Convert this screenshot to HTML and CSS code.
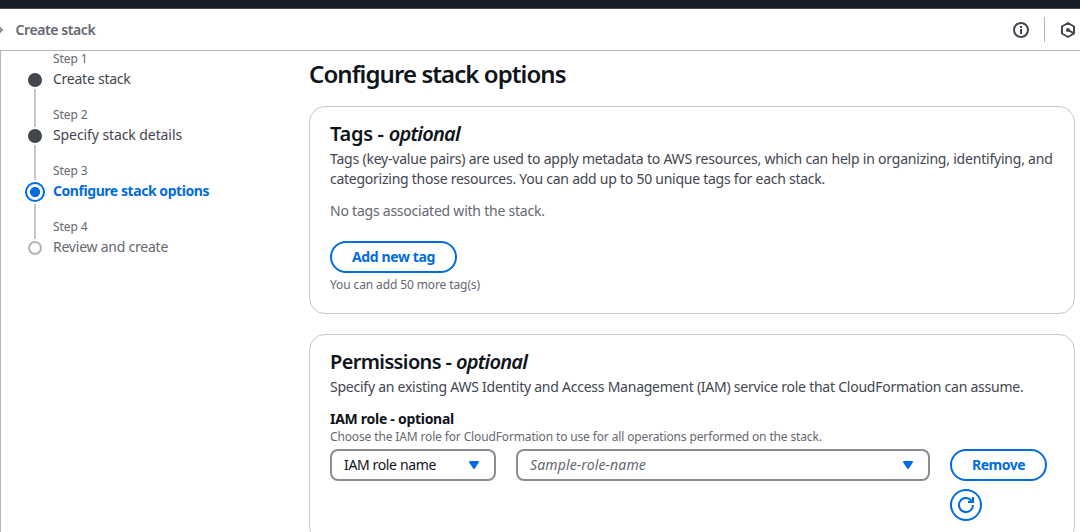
FILE: index.html
```
<!DOCTYPE html>
<html lang="en">
<head>
<meta charset="utf-8">
<title>Configure stack options</title>
<link rel="stylesheet" href="styles.css">
</head>
<body>
<div class="topbar"></div>
<header class="crumbs">
  <svg class="chevron" width="4" height="10" viewBox="0 0 4 10" fill="none" stroke="#8c8c94" stroke-width="2"><path d="M-2 1l4 4-4 4"/></svg>
  <span class="crumb">Create stack</span>
  <div class="tools">
    <svg width="16" height="16" viewBox="0 0 16 16" fill="none" stroke="#424650" stroke-width="2"><circle cx="8" cy="8" r="7"/><path d="M8 4v2M8 7v5"/></svg>
    <span class="divider"></span>
    <svg width="16" height="16" viewBox="0 0 16 16" fill="none" stroke="#424650" stroke-width="2" stroke-linejoin="round"><path d="M8 1l6 3.500v7L8 15l-6-3.500v-7z"/><path d="M8 8l5.500 3.200"/><circle cx="8" cy="8" r="1" fill="#424650"/></svg>
  </div>
</header>
<div class="page">
  <nav>
    <ol class="steps">
      <li class="step done"><div class="rail"><i class="dot"></i><i class="line"></i></div><div class="label"><small>Step 1</small><span class="s1">Create stack</span></div></li>
      <li class="step done"><div class="rail"><i class="dot"></i><i class="line"></i></div><div class="label"><small>Step 2</small><span class="s2">Specify stack details</span></div></li>
      <li class="step active"><div class="rail"><i class="dot"></i><i class="line"></i></div><div class="label"><small>Step 3</small><span class="s3">Configure stack options</span></div></li>
      <li class="step todo"><div class="rail"><i class="dot"></i></div><div class="label"><small>Step 4</small><span class="s4">Review and create</span></div></li>
    </ol>
  </nav>
  <main>
    <h1>Configure stack options</h1>
    <section class="card tags">
      <h2>Tags - <em>optional</em></h2>
      <p class="desc"><span class="d1">Tags (key-value pairs) are used to apply metadata to AWS resources, which can help in organizing, identifying, and</span><br><span class="d2">categorizing those resources. You can add up to 50 unique tags for each stack.</span></p>
      <p class="empty">No tags associated with the stack.</p>
      <button class="btn add">Add new tag</button>
      <p class="hint">You can add 50 more tag(s)</p>
    </section>
    <section class="card perms">
      <h2>Permissions - <em>optional</em></h2>
      <p class="desc">Specify an existing AWS Identity and Access Management (IAM) service role that CloudFormation can assume.</p>
      <p class="field">IAM role - optional</p>
      <p class="hint help">Choose the IAM role for CloudFormation to use for all operations performed on the stack.</p>
      <div class="row">
        <div class="select kind"><span>IAM role name</span><svg width="12" height="9" viewBox="0 0 12 9"><path d="M2 1h8L6 7z" fill="#006ce0" stroke="#006ce0" stroke-width="2" stroke-linejoin="round"/></svg></div>
        <div class="select role"><span>Sample-role-name</span><svg width="12" height="9" viewBox="0 0 12 9"><path d="M2 1h8L6 7z" fill="#006ce0" stroke="#006ce0" stroke-width="2" stroke-linejoin="round"/></svg></div>
        <div class="actions">
          <button class="btn remove">Remove</button>
          <button class="btn refresh" aria-label="Refresh"><svg width="16" height="16" viewBox="0 0 16 16" fill="none" stroke="#006ce0" stroke-width="2"><path d="M15 8a7 7 0 1 1-2.200-5.100L15 5"/><path d="M15 0v5h-5"/></svg></button>
        </div>
      </div>
    </section>
  </main>
</div>
</body>
</html>
```
FILE: styles.css
```
* { box-sizing: border-box; margin: 0; padding: 0; }
body {
  height: 532px;
  overflow: hidden;
  display: flex;
  flex-direction: column;
  background: #fff;
  color: #424650;
  font: 14px/20px "Noto Sans", "Open Sans", sans-serif;
  white-space: nowrap;
}
svg { display: block; flex: none; overflow: hidden; }
.topbar { height: 9px; flex: none; background: #161d26; border-bottom: 1px solid #424650; }
.crumbs {
  height: 42px;
  flex: none;
  display: flex;
  align-items: center;
  border-bottom: 1px solid #b4b4bb;
}
.chevron { margin-right: 11.5px; }
.crumb { color: #656871; font-weight: 650; letter-spacing: -0.41px; }
.tools { margin-left: auto; display: flex; align-items: center; margin-right: 4px; }
.divider { width: 1px; height: 25px; background: #b4b4bb; margin: 0 15px; }
.page { flex: 1; min-height: 0; display: flex; border-left: 1px solid #b4b4bb; }
nav { width: 308px; flex: none; padding-left: 24px; }
.steps { list-style: none; }
.step { display: flex; height: 56px; }
.rail { width: 20px; display: flex; flex-direction: column; align-items: center; padding-top: 22px; }
.dot { width: 14px; height: 14px; flex: none; border-radius: 50%; background: #424650; }
.line { width: 2px; height: 38px; flex: none; background: #c6c6cd; margin-top: 2px; }
.active .dot {
  width: 20px;
  height: 20px;
  margin-top: -3px;
  border: 2px solid #006ce0;
  background: radial-gradient(circle, #006ce0 0 4.7px, #fff 5.300px);
}
.done:nth-child(2) .line { height: 35px; }
.active .line { height: 35px; }
.todo .dot { border: 2px solid #b4b4bb; background: #fff; }
.label { padding-left: 8px; display: flex; flex-direction: column; }
.label small { font-size: 12px; line-height: 16px; color: #656871; padding-bottom: 2px; letter-spacing: -0.09px; }
.s1 { letter-spacing: -0.25px; }
.s2 { letter-spacing: -0.09px; }
.s3 { letter-spacing: -0.44px; color: #006ce0; font-weight: 700; }
.s4 { letter-spacing: -0.23px; color: #656871; }
main { width: 766px; flex: none; padding-top: 8px; color: #424650; }
h1 { font-size: 24px; line-height: 30px; font-weight: 650; letter-spacing: -0.93px; color: #0f141a; }
.card { border: 1px solid #c6c6cd; border-radius: 16px; padding: 15px 20px 0; }
.tags { height: 208px; margin-top: 17px; }
.perms { height: 208px; margin-top: 20px; }
h2 { font-size: 20px; line-height: 24px; font-weight: 650; letter-spacing: -0.63px; color: #0f141a; }
.tags h2 { letter-spacing: -0.29px; }
.tags h2 em, h2 em { letter-spacing: -0.76px; }
.desc { padding-top: 3px; letter-spacing: -0.244px; }
.d1 { letter-spacing: -0.212px; }
.d2 { letter-spacing: -0.254px; }
.empty { margin-top: 12px; color: #656871; letter-spacing: -0.23px; }
.btn {
  height: 32px;
  display: flex;
  align-items: center;
  justify-content: center;
  border: 2px solid #006ce0;
  border-radius: 20px;
  background: #fff;
  color: #006ce0;
  font: 700 14px/20px "Noto Sans", "Open Sans", sans-serif;
}
.add { width: 127px; margin-top: 20px; letter-spacing: -0.37px; }
.hint { font-size: 12px; line-height: 16px; margin-top: 4px; color: #656871; letter-spacing: -0.114px; }
.field { margin-top: 12px; font-weight: 700; color: #0f141a; letter-spacing: -0.28px; }
.help { margin-top: 0; letter-spacing: -0.138px; }
.row { display: flex; align-items: flex-start; gap: 20px; margin-top: 4px; }
.select {
  height: 32px;
  display: flex;
  align-items: center;
  justify-content: space-between;
  border: 2px solid #8c8c94;
  border-radius: 8px;
  padding: 0 14px 0 12px;
}
.kind { width: 166px; color: #0f141a; letter-spacing: -0.36px; }
.role { width: 414px; color: #656871; font-style: italic; letter-spacing: 0.13px; }
.actions { display: flex; flex-direction: column; gap: 8px; }
.remove { width: 97px; letter-spacing: -0.5px; }
.refresh { width: 32px; }
```
